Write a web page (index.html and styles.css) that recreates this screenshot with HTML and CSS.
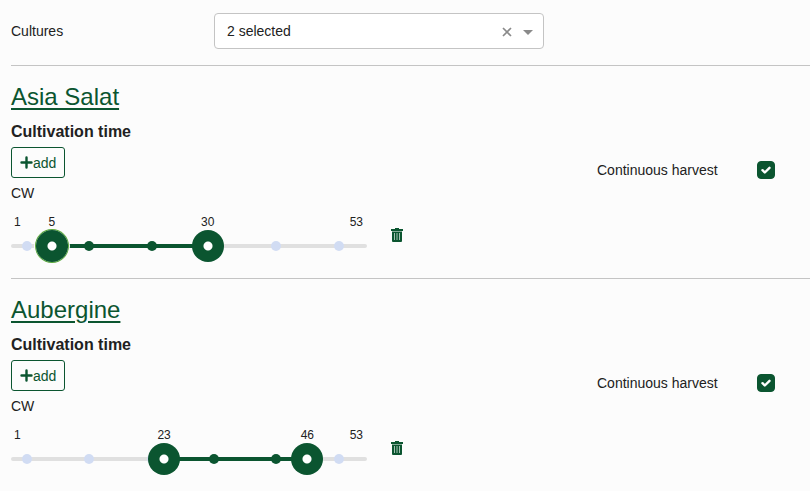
FILE: index.html
```html
<!DOCTYPE html>
<html lang="en">
<head>
    <meta charset="utf-8">
    <meta name="viewport" content="width=device-width, initial-scale=1">
    <title>Cultures</title>
    <link rel="stylesheet" href="styles.css">
</head>
<body>
    <svg class="icon-defs" aria-hidden="true">
        <symbol id="icon-plus" viewBox="0 0 13 13">
            <path d="M6.5 1.5v10M1.5 6.5h10" fill="none" stroke="currentColor" stroke-width="2.4" stroke-linecap="round"/>
        </symbol>
        <symbol id="icon-trash" viewBox="0 0 12 14">
            <path d="M4 0h4v1h4v2H0V1h4z" fill="currentColor"/>
            <path d="M1 3h10v1H1z" fill="currentColor" opacity=".5"/>
            <path d="M1 4h10v9a1 1 0 0 1-1 1H2a1 1 0 0 1-1-1z" fill="currentColor"/>
            <path d="M3.5 5v7M6 5v7M8.5 5v7" stroke="#a3c2b1" stroke-width="1"/>
        </symbol>
    </svg>
    <main class="page">
        <div class="filter">
            <label for="cultures">Cultures</label>
            <div class="select-wrap">
                <select class="select" id="cultures">
                    <option>2 selected</option>
                </select>
                <button class="clear" type="button" aria-label="Clear">
                    <svg width="10" height="10" viewBox="0 0 10 10"><path d="M1 1l8 8M9 1l-8 8" stroke="currentColor" stroke-width="1.7"/></svg>
                </button>
                <svg class="arrow" width="10" height="5" viewBox="0 0 10 5"><path d="M0 0h10L5 5z" fill="currentColor"/></svg>
            </div>
        </div>

        <section class="culture">
            <div class="times">
                <h2 class="name"><a href="#asia-salat">Asia Salat</a></h2>
                <h3 class="subtitle">Cultivation time</h3>
                <button class="add" type="button"><svg class="plus"><use href="#icon-plus"/></svg>add</button>
                <div class="unit">CW</div>
                <div class="period">
                    <div class="slider" style="--from: 5; --to: 30">
                        <span class="limit limit-min">1</span>
                        <span class="limit limit-max">53</span>
                        <output class="value value-from">5</output>
                        <output class="value value-to">30</output>
                        <div class="bar"></div>
                        <div class="ticks"></div>
                        <input class="range range-from active" type="range" min="1" max="53" value="5" aria-label="Asia Salat from week">
                        <input class="range range-to" type="range" min="1" max="53" value="30" aria-label="Asia Salat to week">
                    </div>
                    <button class="delete" type="button" aria-label="Delete"><svg class="trash"><use href="#icon-trash"/></svg></button>
                </div>
            </div>
            <div class="harvest">
                <label for="harvest-1">Continuous harvest</label>
                <input class="check" type="checkbox" id="harvest-1" checked>
            </div>
        </section>

        <section class="culture">
            <div class="times">
                <h2 class="name"><a href="#aubergine">Aubergine</a></h2>
                <h3 class="subtitle">Cultivation time</h3>
                <button class="add" type="button"><svg class="plus"><use href="#icon-plus"/></svg>add</button>
                <div class="unit">CW</div>
                <div class="period">
                    <div class="slider" style="--from: 23; --to: 46">
                        <span class="limit limit-min">1</span>
                        <span class="limit limit-max">53</span>
                        <output class="value value-from">23</output>
                        <output class="value value-to">46</output>
                        <div class="bar"></div>
                        <div class="ticks"></div>
                        <input class="range range-from" type="range" min="1" max="53" value="23" aria-label="Aubergine from week">
                        <input class="range range-to" type="range" min="1" max="53" value="46" aria-label="Aubergine to week">
                    </div>
                    <button class="delete" type="button" aria-label="Delete"><svg class="trash"><use href="#icon-trash"/></svg></button>
                </div>
            </div>
            <div class="harvest">
                <label for="harvest-2">Continuous harvest</label>
                <input class="check" type="checkbox" id="harvest-2" checked>
            </div>
        </section>
    </main>
    <script>
        document.querySelectorAll('.slider').forEach((slider) => {
            const from = slider.querySelector('.range-from');
            const to = slider.querySelector('.range-to');
            const ticks = slider.querySelector('.ticks');

            // one tick every ten weeks
            for (let week = 1; week <= 53; week += 10) {
                const tick = document.createElement('span');
                tick.className = 'tick';
                tick.dataset.week = week;
                tick.style.setProperty('--at', week);
                ticks.appendChild(tick);
            }

            function update() {
                slider.style.setProperty('--from', from.value);
                slider.style.setProperty('--to', to.value);
                slider.querySelector('.value-from').textContent = from.value;
                slider.querySelector('.value-to').textContent = to.value;
                ticks.querySelectorAll('.tick').forEach((tick) => {
                    const week = Number(tick.dataset.week);
                    tick.classList.toggle('selected', week >= Number(from.value) && week <= Number(to.value));
                });
            }

            // the handles may meet but not cross
            from.addEventListener('input', () => {
                from.value = Math.min(from.value, to.value);
                update();
            });
            to.addEventListener('input', () => {
                to.value = Math.max(from.value, to.value);
                update();
            });
            [from, to].forEach((range) => {
                range.addEventListener('pointerdown', () => {
                    document.querySelectorAll('.range.active').forEach((r) => r.classList.remove('active'));
                    range.classList.add('active');
                });
            });
            update();
        });
    </script>
</body>
</html>
```

FILE: styles.css
```css
:root {
    --green: #0b5530;
    --line: #c4c4c4;
    --page: #fcfcfc;
}

* {
    box-sizing: border-box;
}

body {
    margin: 0;
    background-color: var(--page);
    color: #212121;
    font-family: "Liberation Sans", Arial, sans-serif;
    font-size: 14px;
    line-height: 20px;
}

button {
    padding: 0;
    border: none;
    background: none;
    color: var(--green);
    font: inherit;
    cursor: pointer;
}

.icon-defs {
    position: absolute;
    width: 0;
    height: 0;
}

.page {
    padding-left: 11px;
}

.filter {
    display: grid;
    grid-template-columns: 203px minmax(0, 330px);
    align-items: center;
    padding: 13px 0 16px;
}

.select-wrap {
    position: relative;
}

.select {
    display: block;
    width: 100%;
    height: 36px;
    padding: 0 60px 0 12px;
    border: 1px solid var(--line);
    border-radius: 4px;
    background-color: #fff;
    color: inherit;
    font: inherit;
    appearance: none;
}

/* clear button and arrow lie over the select */
.clear {
    position: absolute;
    top: 8px;
    right: 27px;
    display: flex;
    align-items: center;
    justify-content: center;
    width: 20px;
    height: 22px;
    color: #8a8a8a;
}

.arrow {
    position: absolute;
    top: 17px;
    right: 11px;
    color: #8a8a8a;
    pointer-events: none;
}

.culture {
    display: grid;
    grid-template-columns: minmax(0, 1fr) 213px;
    border-top: 1px solid var(--line);
    padding: 15px 0 16px;
}

.name {
    margin: 0;
    font-size: 24px;
    font-weight: normal;
    line-height: 32px;
}

.name a {
    color: var(--green);
    text-decoration-thickness: 2px;
    text-underline-offset: 3px;
}

.subtitle {
    margin: 9px 0 5px;
    font-size: 16px;
    line-height: 20px;
}

.add {
    display: flex;
    align-items: center;
    height: 31px;
    padding: 0 8px;
    border: 1px solid var(--green);
    border-radius: 3px;
}

.plus {
    width: 13px;
    height: 13px;
}

.unit {
    margin-top: 5px;
}

.period {
    display: flex;
    align-items: flex-start;
    gap: 24px;
    margin-top: 10px;
}

.slider {
    position: relative;
    width: 100%;
    max-width: 356px;
    height: 49px;
    font-size: 12px;
    line-height: 16px;
}

.limit,
.value {
    position: absolute;
    top: 1px;
}

.limit-min {
    left: 3px;
}

.limit-max {
    right: 4px;
}

.value {
    transform: translateX(-50%);
}

.value-from {
    left: calc(16px + (100% - 32px) * (var(--from) - 1) / 52);
}

.value-to {
    left: calc(16px + (100% - 32px) * (var(--to) - 1) / 52);
}

.bar {
    position: absolute;
    top: 31px;
    left: 0;
    right: 0;
    height: 4px;
    border-radius: 2px;
    background-color: #e0e0e0;
}

.bar::before {
    content: "";
    position: absolute;
    top: 0;
    bottom: 0;
    left: calc(16px + (100% - 32px) * (var(--from) - 1) / 52);
    right: calc(16px + (100% - 32px) * (53 - var(--to)) / 52);
    background-color: var(--green);
}

.tick {
    position: absolute;
    top: 28px;
    left: calc(11px + (100% - 32px) * (var(--at) - 1) / 52);
    width: 10px;
    height: 10px;
    border-radius: 50%;
    background-color: #d1dcf3;
}

.tick.selected {
    background-color: var(--green);
}

.range {
    position: absolute;
    top: 17px;
    left: 0;
    width: 100%;
    height: 32px;
    margin: 0;
    background: none;
    outline: none;
    appearance: none;
    pointer-events: none;
}

.range::-webkit-slider-thumb {
    width: 32px;
    height: 32px;
    border-radius: 50%;
    background: radial-gradient(circle, #fff 4px, var(--green) 5px);
    appearance: none;
    pointer-events: auto;
    cursor: pointer;
}

.range.active::-webkit-slider-thumb {
    box-shadow: 0 0 0 1px #5aaa3c, 0 0 0 2px var(--page);
}

.delete {
    display: flex;
    flex-shrink: 0;
    margin-top: 15px;
}

.trash {
    width: 12px;
    height: 14px;
}

.harvest {
    display: flex;
    align-items: center;
    align-self: start;
    justify-content: space-between;
    padding: 79px 35px 0 0;
}

.check {
    width: 18px;
    height: 18px;
    margin: 0;
    border: 1px solid var(--green);
    border-radius: 4px;
    appearance: none;
}

.check:checked {
    background: var(--green) url("data:image/svg+xml,%3Csvg xmlns='http://www.w3.org/2000/svg' viewBox='0 0 16 16'%3E%3Cpath d='M4.5 8.2l2.3 2.3 4.7-4.7' fill='none' stroke='white' stroke-width='2.4' stroke-linecap='round' stroke-linejoin='round'/%3E%3C/svg%3E") center / 16px no-repeat;
}
```
